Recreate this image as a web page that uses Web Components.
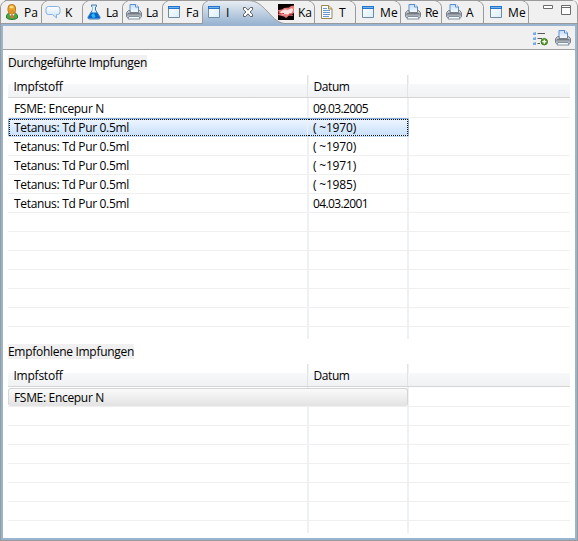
<!DOCTYPE html>
<html lang="de"><head><meta charset="utf-8"><title>Impfungen</title>
<style>html,body{margin:0;width:578px;height:541px;overflow:hidden;background:#f0f0f0}</style></head>
<body><view-frame></view-frame>
<script>
const FONT = '12px/15px "Open Sans","Noto Sans",sans-serif';
const printer = `<defs><linearGradient id="g" x2="0" y2="1"><stop stop-color="#e3e6e9"/><stop offset=".55" stop-color="#959ca4"/><stop offset="1" stop-color="#d3d6da"/></linearGradient><linearGradient id="p" x2="0" y2="1"><stop stop-color="#c3dcf7"/><stop offset="1" stop-color="#f5faff"/></linearGradient></defs>
<path d="M4 8V.5h6L12.500 3v5" fill="url(#p)" stroke="#5f8fca"/><path d="M9.500.5V3h3" fill="#fff" stroke="#5f8fca"/>
<path d="M2.500 6.500h1.500v2h8.500v-2h1.200l1.800 2.200v4l-1 1h-13l-1-1v-4z" fill="url(#g)" stroke="#777f88"/><path d="M2 9.500h12" stroke="#747b84"/><path d="M3 12.500h10l1 2.500H2z" fill="#fafcff" stroke="#8191a3"/>`;
const ICONS = {
printer,
person:`<path d="M2.500 14c-.5-3 1-5 4-5.500h3c3 .5 4.500 2.500 4 5.500-3 2-8 2-11 0z" fill="#4ca545" stroke="#267d2c"/><path d="M5 9.500l3 4 3-4z" fill="#fff"/><path d="M7 10.500h2l.5 3-1.500 1-1.500-1z" fill="#e66b38"/><rect x="4" y=".5" width="7.500" height="9.500" rx="3.500" fill="#e9a52b" stroke="#b87822"/><path d="M5.500 6h4.500v3l-2 1.500L5.500 9z" fill="#e38f2b"/><ellipse cx="7.500" cy="3" rx="2.200" ry="1.300" fill="#ffdb79"/>`,
bubble:`<defs><linearGradient id="b" x2="0" y2="1"><stop stop-color="#fff"/><stop offset="1" stop-color="#c7e1fc"/></linearGradient></defs><path d="M3.500 2.500h9q2.500 0 2.500 2.500v3q0 2.500-2.500 2.500h-1V14L7.500 10.500h-4Q1 10.500 1 8V5q0-2.500 2.500-2.500z" fill="url(#b)" stroke="#83b2e4"/>`,
flask:`<path d="M5.500 1h5v1.500l-1 .5v3l4.500 7q.5 2-1.500 2h-9q-2 0-1.500-2l4.500-7V3l-1-.5z" fill="#d8edfb" stroke="#397cae"/><path d="M5 8.500h6l2.700 4.700q.2 1.300-1.200 1.300h-9q-1.400 0-1.200-1.300z" fill="#0864ca"/><path d="M5 11l3-2 1.500 4-2.500 1z" fill="#29b6f2"/><path d="M7 3v4" stroke="#fff"/>`,
window:`<defs><linearGradient id="w" x2="1" y2="1"><stop stop-color="#fff"/><stop offset="1" stop-color="#d9edfa"/></linearGradient></defs><path d="M2.500 2.500h11v11h-11z" fill="url(#w)" stroke="#718aa5"/><path d="M2 2h12v3H2z" fill="#2874ca"/><path d="M3 3.500h10" stroke="#74b4ee"/>`,
fish:`<path d="M0 0h16v16H0z" fill="#080000"/><path d="M0 6l4-.5L6 4l5-.5L13 2l3-.5V9l-2 1 1 2-4-.5-3 2.500-2-1.500L4 12l-4-1 1-2z" fill="#e8787a"/><path d="M3 7l4-1.500 3 .5 4-2 1 1.500-1 3-4 2-3-.5-3 1-2-1.500z" fill="#ffe6e2"/><path d="M0 8.500l3 1.500 3-.5M11 10l3 .5" stroke="#ba2027" fill="none"/>`,
doc:`<path d="M2.500 1.500h7l3.500 3v10H2.500z" fill="#f7fbff" stroke="#9a8752"/><path d="M9.500 1.500V5H13" fill="#eedb9b" stroke="#9a8752"/><path d="M4 4.500h4M4 6.500h7M4 8.500h7M4 10.500h7M4 12.500h6" stroke="#6c98ce"/>`,
close:`<path d="M3.500 3.500h2.200L8 6.200l2.300-2.700h2.200v2.200L10 8l2.500 2.300v2.200h-2.200L8 9.800l-2.300 2.700H3.500v-2.200L6 8 3.500 5.700z" fill="#fff" stroke="#5d6268"/>`,
list:`<path d="M1 2h3v3H1zM1 7h3v3H1zM1 12h3v3H1z" fill="#7da9e4"/><path d="M1 2h2v1H1zM1 7h2v1H1zM1 12h2v1H1z" fill="#b9d5f5"/><path d="M5.500 3.500H13M5.500 8.500H10M5.500 13.500H8" stroke="#55595e"/><circle cx="12.300" cy="11.700" r="3.200" fill="#5a9c2a" stroke="#3e7c1c"/><path d="M10.300 11.700h4M12.300 9.700v4" stroke="#fff" stroke-width="1.300"/>`,
min:`<path d="M.5 1.500h9v3h-9z" fill="#fff" stroke="#6b6b6b"/>`,
max:`<path d="M.5 1.500h9v9h-9z" fill="#fff" stroke="#6b6b6b"/><path d="M0 3.500h10" stroke="#6b6b6b"/>`
};
function define(name, render){customElements.define(name,class extends HTMLElement{connectedCallback(){if(this.shadowRoot)return;this.attachShadow({mode:'open'}).innerHTML=render(this)}})}
define('ui-icon',e=>`<style>:host{display:block;width:16px;height:16px;flex:none}svg{display:block}</style><svg width="16" height="16" viewBox="0 0 16 16" fill="none">${ICONS[e.getAttribute('name')]}</svg>`);
/* Text run spread evenly over a fixed width. */
customElements.define('ui-text',class extends HTMLElement{connectedCallback(){
 if(this.shadowRoot)return;
 const w=+this.getAttribute('w');
 this.attachShadow({mode:'open'}).innerHTML=`<style>:host{display:block;width:${w}px;font:${FONT};color:#000;white-space:pre;flex:none}span{display:inline-block}</style><span>${this.getAttribute('text')}</span>`;
 const s=this.shadowRoot.querySelector('span'),n=s.textContent.length;
 s.style.letterSpacing=(w-s.getBoundingClientRect().width)/n+'px';
}});
/* Editor tab: side = left | right | active, edge shape drawn as a backing outline. */
define('ui-tab',e=>{const a=k=>e.getAttribute(k),w=+a('w'),side=a('side');
 const curve='M.5 24V6.500L1.500 4 4 1.500 6.500.5H45C55 .5 59 5 65 11S74 22 82 23.500';
 const shape=side==='left'?`<path d="M.5 24V6.500L1.500 4 4 1.500 6.500.5H${w}" stroke="#9a9a9a"/>`
 :side==='right'?`<path d="M${w-7} .5L${w-4} 1.500 ${w-1.5} 4 ${w-.5} 6.500V24" stroke="#9a9a9a"/>`
 :`<defs><linearGradient id="a" x2="0" y2="1"><stop stop-color="#e9eef4"/><stop offset="1" stop-color="#99b4d1"/></linearGradient></defs><path d="${curve}V24z" fill="url(#a)"/><path d="${curve}" stroke="#9a9a9a"/>`;
 return `<style>:host{display:grid;width:${w}px;height:24px;flex:none}svg,div{grid-area:1/1}svg{overflow:visible}div{display:flex;padding-left:4px;gap:4px;padding-top:4px}ui-text{margin-top:1px}.x{margin-left:6px}</style><svg width="${w}" height="24" fill="none">${shape}</svg><div><ui-icon name="${a('icon')}"></ui-icon><ui-text text="${a('label')}" w="${a('tw')}"></ui-text>${side==='active'?'<ui-icon class="x" name="close"></ui-icon>':''}</div>`});
define('tab-bar',()=>`<style>:host{display:flex;height:24px;border-radius:0 6px 0 0;box-shadow:inset -1px 0 #9a9a9a;background:linear-gradient(#9a9a9a,#9a9a9a) 0 23px/100% 1px no-repeat,linear-gradient(#9a9a9a,#9a9a9a) 5px 0/568px 1px no-repeat,#f0f0f0}.c{display:flex;padding:4px 0 0 14px;gap:2px}</style>`+
[['left',41,'person','Pa',14],['left',41,'bubble','K',8],['left',40,'flask','La',12],['left',40,'printer','La',12],['left',40,'window','Fa',13],['active',72,'window','I',4],['right',41,'fish','Ka',14],['right',41,'doc','T',7],['right',45,'window','Me',18],['right',41,'printer','Re',13],['right',42,'printer','A',8],['right',45,'window','Me',18]].map(t=>`<ui-tab side="${t[0]}" w="${t[1]}" icon="${t[2]}" label="${t[3]}" tw="${t[4]}"></ui-tab>`).join('')+`<div class="c"><ui-icon name="min"></ui-icon><ui-icon name="max"></ui-icon></div>`);
define('tool-bar',()=>`<style>:host{display:flex;justify-content:flex-end;gap:7px;padding:4px 4px 0 0;box-sizing:border-box;height:24px;background:#f0f0f0;border-bottom:1px solid #9f9f9f}</style><ui-icon name="list"></ui-icon><ui-icon name="printer"></ui-icon>`);
define('data-table',e=>{const d=JSON.parse(e.getAttribute('rows')),h=+e.getAttribute('h'),sel=+e.getAttribute('sel'),n=Math.ceil((h-24)/19);
 const rows=Array.from({length:n},(_,i)=>{const r=d[i]||[];return `<div class="r ${i===sel?e.getAttribute('kind'):''}"><div class="c1">${r[0]?`<ui-text text="${r[0][0]}" w="${r[0][1]}"></ui-text>`:''}</div><div class="c2">${r[1]?`<ui-text text="${r[1][0]}" w="${r[1][1]}"></ui-text>`:''}</div></div>`}).join('');
 return `<style>:host{display:block;width:562px;height:${h}px;overflow:hidden;background:linear-gradient(#edf0f5,#edf0f5) 299px 0/2px 100% no-repeat,linear-gradient(#edf0f5,#edf0f5) 399px 0/2px 100% no-repeat,#fff}
 .h,.r{display:grid;grid-template-columns:300px 101px 1fr}
 .h{height:23px;box-sizing:border-box;border-bottom:1px solid #d5d5d5;margin-bottom:1px;background:linear-gradient(#e1e4e7,#e1e4e7) 299px 0/1px 100% no-repeat,linear-gradient(#e1e4e7,#e1e4e7) 399px 0/1px 100% no-repeat,linear-gradient(transparent 9px,#f7f8fa 9px,#f1f2f4)}
 .h ui-text{margin:4px 0 0 5.500px}
 .r{height:19px;box-sizing:border-box;border-bottom:1px solid #efefef}.c1{padding:2px 0 0 6px}.c2{padding:2px 0 0 5px}
 .blue{border:1px solid #84acdd;border-bottom-color:#c3dbf7;border-radius:2px;width:401px;grid-template-columns:299px 100px}
 .blue .c1,.blue .c2{background:linear-gradient(#edf5ff,#cae1fc);border-top:1px dotted #111;border-bottom:1px dotted #111;padding-top:0}.blue .c1{border-left:1px dotted #111;padding-left:4px;margin-right:1px}.blue .c2{border-right:1px dotted #111;padding-left:5px}
 .gray{border-bottom:0;background:linear-gradient(#efefef,#efefef) 0 18px/100% 1px no-repeat}.gray .c1{grid-column:1/3;grid-row:1;height:18px;box-sizing:border-box;border:1px solid #d5d5d5;border-bottom-color:#e4e4e4;border-radius:3px;background:linear-gradient(#fafafa,#e4e4e4);margin-right:1px;padding:1px 0 0 5px}.gray .c2{display:none}
 </style><div class="h"><ui-text text="Impfstoff" w="49"></ui-text><ui-text text="Datum" w="36"></ui-text></div>${rows}`});
define('section-label',e=>`<style>:host{display:block;height:15px;width:${e.getAttribute('w')}px;background:#f0f0f0}</style><ui-text text="${e.getAttribute('text')}" w="${e.getAttribute('w')}"></ui-text>`);
define('view-frame',()=>{const t=['Tetanus: Td Pur 0.5ml',115],f=['FSME: Encepur N',90];
 const r1=[[f,['09.03.2005',55]],[t,['( ~1970)',43]],[t,['( ~1970)',43]],[t,['( ~1971)',43]],[t,['( ~1985)',43]],[t,['04.03.2001',55]]];
 return `<style>:host{display:flex;flex-direction:column;width:578px;height:541px;box-sizing:border-box}
 .b{flex:1;display:flex;flex-direction:column;border:1px solid #9a9a9a;border-top:0;background:#99b4d1;padding:2px}
 .w{flex:1;background:#fff;padding:5px 0 0 5px}section+section{margin-top:5px}section{display:flex;flex-direction:column;gap:5px}</style>
 <tab-bar></tab-bar><div class="b"><tool-bar></tool-bar><div class="w"><section><section-label text="Durchgeführte Impfungen" w="139"></section-label><data-table h="264" sel="1" kind="blue" rows='${JSON.stringify(r1)}'></data-table></section><section><section-label text="Empfohlene Impfungen" w="126"></section-label><data-table h="169" sel="0" kind="gray" rows='${JSON.stringify([[f]])}'></data-table></section></div></div>`});
</script></body></html>
